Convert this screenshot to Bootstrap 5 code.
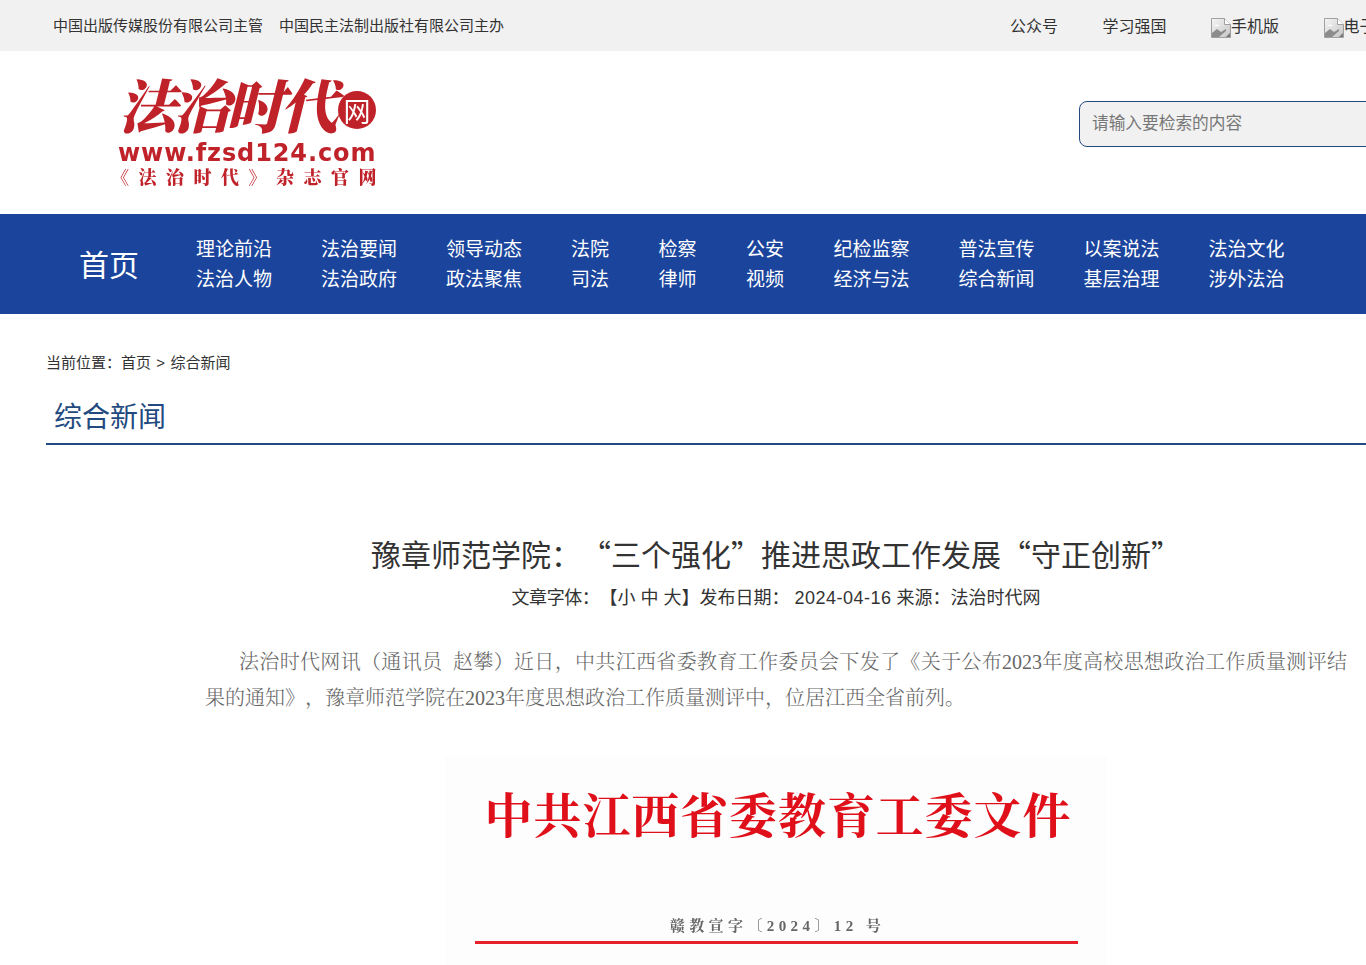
<!DOCTYPE html>
<html lang="zh-CN">
<head>
  <meta charset="UTF-8" />
  <title>豫章师范学院：“三个强化”推进思政工作发展“守正创新”</title>
  <link href="https://cdn.jsdelivr.net/npm/bootstrap@5.3.3/dist/css/bootstrap.min.css" rel="stylesheet">
  <style>
    html, body { overflow-x: hidden; }
    body {
      width: 1366px;
      height: 965px;
      overflow: hidden;
      color: #333;
      font-family: "Liberation Sans", "Noto Sans CJK SC", sans-serif;
      text-spacing-trim: space-all;
    }
    a { color: inherit; text-decoration: none; }
    .top-strip { height: 51px; background: #f1f1f1; font-size: 16px; color: #333; padding: 2px 0 0 53px; white-space: nowrap; }
    .top-left { width: 957px; flex: none; gap: 16px; font-size: 15px; }
    .top-links { gap: 44.5px; flex: none; }
    .broken-pic { width: 20px; height: 20px; display: block; margin-top: 3px; }
    .head-band { height: 163px; padding: 22px 0 0 118px; }
    .site-logo { width: 262px; flex: none; color: #c0222a; line-height: 1; filter: blur(.4px); }
    .logo-main { font-family: "Noto Serif CJK SC", "Noto Sans CJK SC", serif; font-size: 58px; line-height: 60px; font-weight: 900; font-style: italic; letter-spacing: -4px; height: 68px; white-space: nowrap; }
    .logo-badge { width: 38px; height: 38px; border-radius: 50%; background: #c0222a; color: #fff; font-family: "Noto Sans CJK SC", sans-serif; font-size: 27px; line-height: 1; font-style: normal; font-weight: 400; letter-spacing: 0; flex: none; margin: 18px 0 0 4px; }
    .logo-url { font-size: 24px; line-height: 24px; font-weight: 700; letter-spacing: .9px; font-family: "DejaVu Sans", sans-serif; white-space: nowrap; }
    .logo-sub { font-family: "Noto Serif CJK SC", "Noto Sans CJK SC", serif; font-size: 18px; line-height: 18px; font-weight: 900; margin-top: 2px; padding-left: 2px; white-space: nowrap; letter-spacing: 9.5px; text-spacing-trim: trim-start; }
    .search-box { width: 400px; height: 46px; margin: 28px 0 0 699px; flex: none; border: 1px solid #234a80; border-radius: 8px; background: #f1f1f1; font-size: 16.7px; color: #777; padding-left: 12px; }
    .main-nav { height: 100px; background: #1b459d; color: #fff; white-space: nowrap; font-size: 19px; line-height: 30px; padding: 2px 0 0 79px; }
    .nav-home { font-size: 30px; width: 117px; flex: none; padding-top: 2px; }
    .nav-col { flex: none; }
    .w-wide { width: 125px; }
    .w-thin { width: 87.5px; }
    .crumbs { padding: 39px 0 0 46px; font-size: 15px; line-height: 20px; word-spacing: 1.2px; }
    .cat-head { margin: 22px 0 0 46px; width: 1400px; height: 50px; border-bottom: 2px solid #234a80; color: #234a80; font-size: 28px; line-height: 46px; padding-left: 8px; }
    .art-wrap { width: 1142px; margin-left: 205px; }
    .art-title { margin: 86px 0 0 0; width: 1142px; font-family: "Noto Sans CJK SC", sans-serif; font-size: 30px; line-height: 44px; font-weight: 400; color: #333; text-align: center; white-space: nowrap; }
    .art-meta { width: 1142px; font-size: 18px; line-height: 30px; margin-top: 8px; text-align: center; white-space: nowrap; }
    .art-date { letter-spacing: .5px; }
    .art-label { letter-spacing: -.4px; }
    .art-body { margin-top: 31px; color: #666; font-size: 20px; line-height: 36px; font-family: "Liberation Serif", "Noto Serif CJK SC", "Noto Sans CJK SC", serif; font-weight: 300; text-indent: 34px; text-align: justify; }
    .doc-pic { width: 662px; height: 220px; margin: 40px 0 0 240px; background: #fdfdfd; color: #e0101a; overflow: hidden; filter: blur(.4px); font-family: "Liberation Serif", "Noto Serif CJK SC", "Noto Sans CJK SC", serif; }
    .doc-title { font-size: 48px; line-height: 60px; font-weight: 700; margin-top: 31px; padding-left: 4px; white-space: nowrap; letter-spacing: .9px; }
    .doc-num { font-size: 15px; font-weight: 700; color: #666; line-height: 20px; margin-top: 69px; padding-left: 3px; letter-spacing: 4.4px; }
    .doc-line { width: 603px; height: 3px; background: #e8202a; margin-top: 5px; }
  </style>
</head>
<body>

  <div class="top-strip d-flex align-items-center">
    <div class="top-left d-flex"><span>中国出版传媒股份有限公司主管</span><span>中国民主法制出版社有限公司主办</span></div>
    <div class="top-links d-flex">
      <a href="#">公众号</a>
      <a href="#">学习强国</a>
      <a href="#" class="d-flex"><svg class="broken-pic" viewBox="0 0 20 20"><defs><linearGradient id="pg" x1="0" y1="0" x2="1" y2="1"><stop offset="0" stop-color="#f6f6f6"/><stop offset="1" stop-color="#c4c4c4"/></linearGradient></defs><path d="M.5.5h13l6 6v13H.5z" fill="url(#pg)" stroke="#a0a0a0"/><path d="M13.5.5v6h6" fill="#fff" stroke="#a0a0a0"/><path d="M1 19V15l5-4 4 3 5-3v2l-7 6z" fill="#8c8c8c"/><path d="M3 8q3-3 6 0z" fill="#fff"/><path d="M15 19l4-4v4z" fill="#777"/></svg>手机版</a>
      <a href="#" class="d-flex"><svg class="broken-pic" viewBox="0 0 20 20"><path d="M.5.5h13l6 6v13H.5z" fill="url(#pg)" stroke="#a0a0a0"/><path d="M13.5.5v6h6" fill="#fff" stroke="#a0a0a0"/><path d="M1 19V15l5-4 4 3 5-3v2l-7 6z" fill="#8c8c8c"/><path d="M3 8q3-3 6 0z" fill="#fff"/><path d="M15 19l4-4v4z" fill="#777"/></svg>电子刊</a>
    </div>
  </div>

  <div class="head-band d-flex align-items-start">
    <div class="site-logo">
      <div class="logo-main d-flex align-items-start">法治时代<span class="logo-badge d-flex align-items-center justify-content-center">网</span></div>
      <div class="logo-url">www.fzsd124.com</div>
      <div class="logo-sub">《法治时代》杂志官网</div>
    </div>
    <div class="search-box d-flex align-items-center">请输入要检索的内容</div>
  </div>

  <nav class="main-nav d-flex align-items-center">
    <a href="#" class="nav-home">首页</a>
    <div class="nav-col w-wide"><a href="#" class="d-block">理论前沿</a><a href="#" class="d-block">法治人物</a></div>
    <div class="nav-col w-wide"><a href="#" class="d-block">法治要闻</a><a href="#" class="d-block">法治政府</a></div>
    <div class="nav-col w-wide"><a href="#" class="d-block">领导动态</a><a href="#" class="d-block">政法聚焦</a></div>
    <div class="nav-col w-thin"><a href="#" class="d-block">法院</a><a href="#" class="d-block">司法</a></div>
    <div class="nav-col w-thin"><a href="#" class="d-block">检察</a><a href="#" class="d-block">律师</a></div>
    <div class="nav-col w-thin"><a href="#" class="d-block">公安</a><a href="#" class="d-block">视频</a></div>
    <div class="nav-col w-wide"><a href="#" class="d-block">纪检监察</a><a href="#" class="d-block">经济与法</a></div>
    <div class="nav-col w-wide"><a href="#" class="d-block">普法宣传</a><a href="#" class="d-block">综合新闻</a></div>
    <div class="nav-col w-wide"><a href="#" class="d-block">以案说法</a><a href="#" class="d-block">基层治理</a></div>
    <div class="nav-col w-wide"><a href="#" class="d-block">法治文化</a><a href="#" class="d-block">涉外法治</a></div>
  </nav>

  <div class="crumbs">当前位置：首页 &gt; 综合新闻</div>
  <div class="cat-head">综合新闻</div>

  <div class="art-wrap">
    <h1 class="art-title">豫章师范学院：“三个强化”推进思政工作发展“守正创新”</h1>
    <div class="art-meta"><span class="art-label">文章字体：</span>【小 中 大】发布日期： <span class="art-date">2024-04-16</span> 来源：法治时代网</div>
    <p class="art-body mb-0">法治时代网讯（通讯员&nbsp; 赵攀）近日，中共江西省委教育工作委员会下发了《关于公布2023年度高校思想政治工作质量测评结果的通知》，豫章师范学院在2023年度思想政治工作质量测评中，位居江西全省前列。</p>
    <div class="doc-pic d-flex flex-column align-items-center">
      <div class="doc-title">中共江西省委教育工委文件</div>
      <div class="doc-num">赣教宣字〔2024〕12 号</div>
      <div class="doc-line"></div>
    </div>
  </div>

  <script src="https://cdn.jsdelivr.net/npm/bootstrap@5.3.3/dist/js/bootstrap.bundle.min.js"></script>
</body>
</html>
